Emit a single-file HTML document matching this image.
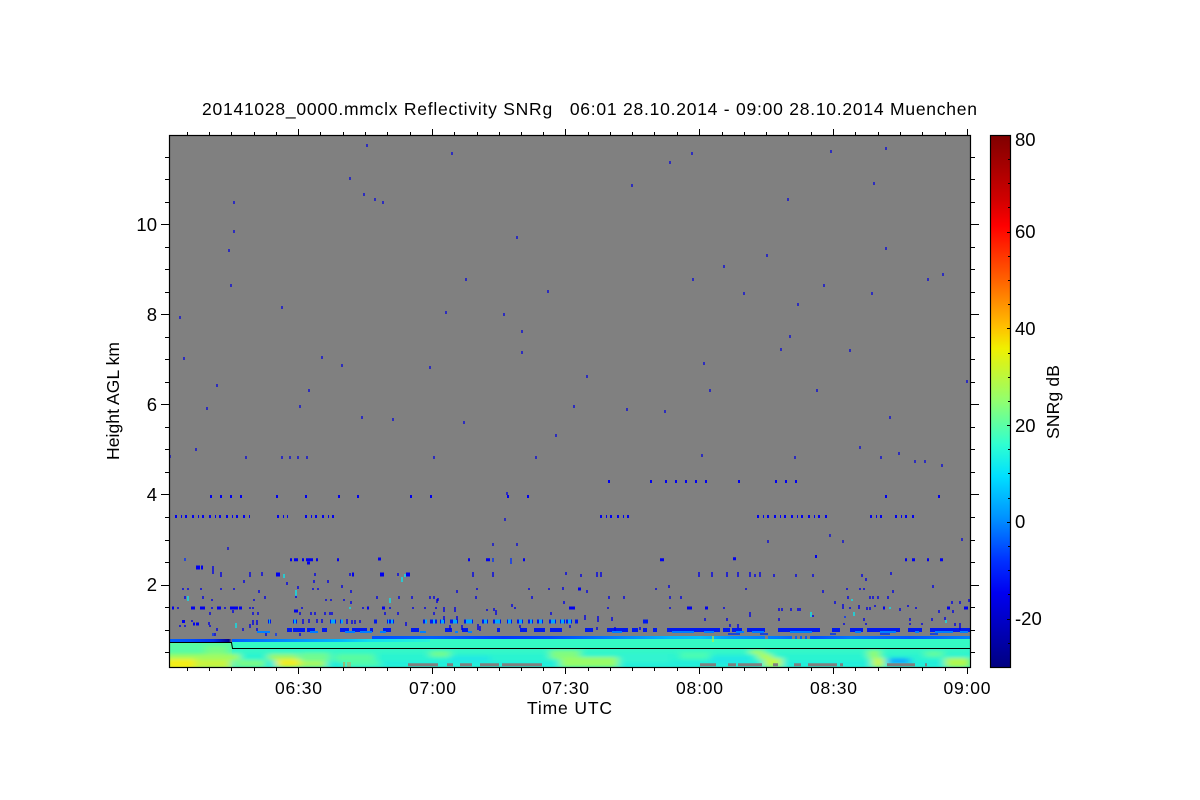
<!DOCTYPE html>
<html><head><meta charset="utf-8"><style>
html,body{margin:0;padding:0;background:#fff;width:1200px;height:800px;overflow:hidden}
svg{display:block}
text{font-family:"Liberation Sans",sans-serif;font-size:17.5px;fill:#000}
.n{font-size:18.5px}
</style></head><body>
<svg width="1200" height="800" viewBox="0 0 1200 800" xmlns="http://www.w3.org/2000/svg">
<defs>
<clipPath id="c"><rect x="170" y="136" width="800" height="531"/></clipPath>
<clipPath id="h"><path d="M170 643H232V649H970V667H170Z"/></clipPath>
<filter id="b" x="-30%" y="-100%" width="160%" height="300%"><feGaussianBlur stdDeviation="4 1.8"/></filter>
<linearGradient id="cb" x1="0" y1="0" x2="0" y2="1">
<stop offset="0" stop-color="#800000"/><stop offset=".12" stop-color="#d00000"/><stop offset=".17" stop-color="#ff0000"/><stop offset=".27" stop-color="#ff6000"/><stop offset=".36" stop-color="#ffc000"/><stop offset=".4" stop-color="#f0f000"/><stop offset=".5" stop-color="#90ff70"/><stop offset=".58" stop-color="#30ffd0"/><stop offset=".64" stop-color="#00e0ff"/><stop offset=".72" stop-color="#0090ff"/><stop offset=".8" stop-color="#0030ff"/><stop offset=".86" stop-color="#0000f0"/><stop offset="1" stop-color="#000080"/>
</linearGradient>
<linearGradient id="bl" gradientUnits="userSpaceOnUse" x1="372" x2="970" y1="0" y2="0">
<stop offset="0" stop-color="#0050ff"/><stop offset=".1" stop-color="#0060ff"/><stop offset=".22" stop-color="#0038ff"/><stop offset=".3" stop-color="#0048ff"/><stop offset=".38" stop-color="#0070ff"/><stop offset=".44" stop-color="#0090ff"/><stop offset=".5" stop-color="#00b8ff"/><stop offset=".55" stop-color="#00c0ff"/><stop offset=".6" stop-color="#0098ff"/><stop offset=".68" stop-color="#0078ff"/><stop offset=".74" stop-color="#0050ff"/><stop offset=".8" stop-color="#0078ff"/><stop offset=".9" stop-color="#0058ff"/><stop offset="1" stop-color="#0080ff"/>
</linearGradient>
<linearGradient id="cy" gradientUnits="userSpaceOnUse" x1="232" x2="430" y1="0" y2="0">
<stop offset="0" stop-color="#0060ff"/><stop offset=".3" stop-color="#0090ff"/><stop offset=".55" stop-color="#00b8ff"/><stop offset=".7" stop-color="#10e0f0"/><stop offset="1" stop-color="#28f4d8"/>
</linearGradient>
<linearGradient id="lf" gradientUnits="userSpaceOnUse" x1="170" x2="232" y1="0" y2="0">
<stop offset="0" stop-color="#0060ff"/><stop offset=".3" stop-color="#0050ff"/><stop offset=".7" stop-color="#0030f0"/><stop offset=".95" stop-color="#000090"/><stop offset="1" stop-color="#808080"/>
</linearGradient>
</defs>
<rect width="1200" height="800" fill="#fff"/>
<rect x="170" y="136" width="800" height="531" fill="#808080"/>
<g clip-path="url(#c)">
<!-- heat base -->
<rect x="170" y="642" width="800" height="25" fill="#30f4d0"/>
<rect x="232" y="639" width="738" height="10" fill="#34fac4"/>
<rect x="232" y="639" width="198" height="3" fill="url(#cy)"/>
<rect x="372" y="636" width="598" height="3" fill="url(#bl)"/>
<rect x="170" y="639" width="62" height="3" fill="url(#lf)"/>
<rect x="170" y="643" width="62" height="24" fill="#58fca4"/>
<g clip-path="url(#h)"><g filter="url(#b)">
<rect x="232" y="649" width="738" height="4" fill="#38f8c4"/>
<rect x="232" y="653" width="738" height="8" fill="#2cf4d0"/>
<rect x="232" y="661" width="738" height="6" fill="#24eedc"/>
<rect x="165" y="654" width="75" height="6" fill="#a0fc60"/>
<rect x="165" y="659" width="30" height="10" fill="#f4ee18"/>
<rect x="195" y="660" width="36" height="8" fill="#c8f440"/>
<rect x="205" y="646" width="22" height="8" fill="#78fc84"/>
<rect x="235" y="660" width="30" height="7" fill="#78fc88"/>
<rect x="268" y="654" width="30" height="6" fill="#98f868"/>
<rect x="276" y="659" width="24" height="8" fill="#f0ee20"/>
<rect x="300" y="653" width="30" height="8" fill="#70fc90"/>
<rect x="300" y="661" width="26" height="6" fill="#a8f860"/>
<rect x="335" y="654" width="40" height="8" fill="#58fca0"/>
<rect x="345" y="661" width="35" height="5" fill="#50fcac"/>
<rect x="430" y="651" width="20" height="6" fill="#70fc90"/>
<rect x="450" y="656" width="40" height="6" fill="#20e8e4"/>
<rect x="550" y="650" width="30" height="9" fill="#80fc80"/>
<rect x="560" y="657" width="58" height="10" fill="#98fc68"/>
<rect x="620" y="655" width="50" height="8" fill="#30f4d0"/>
<rect x="680" y="652" width="30" height="7" fill="#48fcb4"/>
<rect x="710" y="656" width="40" height="8" fill="#20e8e4"/>
<rect x="750" y="650" width="14" height="4" fill="#a8fc58"/>
<rect x="758" y="654" width="14" height="5" fill="#b0fc50"/>
<rect x="764" y="658" width="18" height="9" fill="#c0f848"/>
<rect x="868" y="650" width="12" height="8" fill="#90fc70"/>
<rect x="872" y="658" width="12" height="9" fill="#c8f840"/>
<rect x="888" y="658" width="22" height="6" fill="#0aa8ff"/>
<rect x="925" y="651" width="18" height="6" fill="#60fca0"/>
<rect x="945" y="658" width="25" height="9" fill="#b0f850"/>
</g></g>
<!-- gray strip -->
<path d="M408 664.8h30M447 664.8h6M460 664.8h12M480 664.8h19M502 664.8h40M700 664.8h16M728 664.8h8m2 0h24M773 664.8h5M794 664.8h7M808 664.8h29m3 0h3M887 664.8h28M925 664.8h2" stroke="#808080" stroke-width="3" fill="none"/>
<path d="M344 662v5" stroke="#f08020" fill="none"/>
<path d="M348 662v5M350 662v5" stroke="#c0a060" fill="none"/>
<path d="M713 636v6" stroke="#c8f030" stroke-width="1.2" fill="none"/>
<!-- gaps in the blue band -->
<path d="M765 637.5h3M792 637.5h19" stroke="#808080" stroke-width="3" fill="none" stroke-dasharray="3 2"/>
<!-- black boundary -->
<path d="M170 642.5H231.5L232.5 648.5H970" stroke="#000" stroke-width="1" fill="none"/>
<!-- wide speckle rows -->
<g fill="none" stroke-width="3" stroke="#0000f0">
<path stroke-dasharray="2 4 1 3 2 5" d="M175 516.5H250M277 516.5H288M305 516.5H335M600 516.5H630M757 516.5H830M870 516.5H885M895 516.5H915"/>
<path stroke-dasharray="2 8" d="M210 496.5H246M276 496.5H279M305 496.5H308M338 496.5H340M357 496.5H359M410 496.5H416M430 496.5H432M507 496.5H509M527 496.5H529M885 496.5H887M938 496.5H940"/>
<path stroke-dasharray="2 8" d="M650 481.5H652M665 481.5H712M738 481.5H740M775 481.5H803M608 481.5H612"/>
<path d="M290 559.8h2M294 559.8h4M302 559.8h2M306 559.8h7M316 559.8h2M307 563h3M337 559.8h2M468 559.8h2M486 559.8h4M523 559.8h2M660 559.8h4M733 558.8h3M815 556.5h2M912 559.8h3M927 559.8h2M940 559.8h3M378 559h3M905 559.8h2"/>
<path d="M196 567.5h4M201 567.5h2M276 574.5h4M380 574.5h4M406 574.5h4M352 574.5h2" stroke-width="4"/>
<path d="M172 608h2M191 608h4M200 608h5M217 608h4M230 608h8M239 608h3M294 611h4M367 608h2M382 608h3M569 608h6M687 608h5M705 608h3M883 608h2M947 608h3M964 608h4"/>
<path d="M182 621.5h3M193 624h2M196 624h3M578 589h3" stroke-width="3"/>
</g>
<!-- dense rows -->
<g fill="none" stroke-width="4">
<path stroke="#0018f0" d="M268 621.5h3M293 621.5h4M330 621.5h6M340 621.5h3M374 621.5h3M387 621.5h7M423 621.5h4M430 621.5h7M440 621.5h5M450 621.5h8M464 621.5h9M482 621.5h6M493 621.5h8M507 621.5h5M517 621.5h6M528 621.5h5M537 621.5h6M549 621.5h7M560 621.5h5M566 621.5h6M575 621.5h3M643 621.5h5"/>
<path stroke="#00a8ff" d="M269 621.5h1M294 621.5h2M331 621.5h4M341 621.5h2M388 621.5h1M391 621.5h2M425 621.5h2M433 621.5h2M441 621.5h3M453 621.5h4M466 621.5h6M484 621.5h3M495 621.5h5M508 621.5h3M519 621.5h3M530 621.5h2M539 621.5h3M551 621.5h4M561 621.5h3M568 621.5h3"/>
<path stroke="#0018f0" d="M287 630h5M293 630h12M307 630h8M322 630h5M340 630h7M352 630h3M347 630h2M355 630h12M370 630h3M383 630h8M411 630h8M445 630h7M462 630h6M497 630h3M520 630h7M534 630h11M550 630h12M585 630h8M607 630h21M632 630h6M643 630h4M653 630h4M667 630h33M700 630h20M723 630h7M732 630h10M747 630h18M778 630h42M832 630h8M850 630h13M867 630h33M908 630h14M930 630h40"/>
<path stroke="#0080ff" stroke-width="2" d="M257 632h13M310 632h8M345 632h10M360 632h12M380 632h6M420 632h6M455 632h3M468 632h4M612 632h10M672 632h22M704 632h10M736 632h8M752 632h12M790 632h22M855 632h6M880 632h16M915 632h4M935 632h18M960 632h8"/>
<path stroke="#0030f0" stroke-width="1.5" d="M728 634h12M760 634h8M830 634h6M880 634h10M930 634h8"/>
</g>
<!-- vertical bars -->
<path fill="none" stroke="#0000e8" stroke-width="1.4" d="M213 566v8M221 572v5M250 572v5M262 572v4M315 573v3M350 573v3M398 573v3M473 572v5M493 572v5M566 572v3M581 574v3M597 572v5M601 572v5M699 572v5M712 572v5M727 572v5M738 572v5M750 572v5M755 574v3M760 572v5M774 574v3M796 574v3M813 574v3M862 574v3M866 578v3M891 572v3M244 580v3M287 582v3M298 586v3M314 580v3M328 580v3M342 585v3M183 588v2M188 588v2M201 588v2M221 588v2M234 588v2M259 590v3M313 588v2M318 588v2M351 590v3M457 590v3M477 588v2M529 588v2M549 588v2M563 587v3M587 590v3M656 588v2M669 585v3M746 588v2M823 590v3M847 588v2M860 588v2M864 588v2M893 590v3M933 585v3M185 596v3M203 596v3M212 599v2M254 599v2M265 596v3M296 595v3M326 599v2M331 599v2M344 599v2M351 601v3M377 596v3M399 596v3M412 596v3M430 596v3M438 598v3M434 596v3M437 599v4M476 596v3M512 604v3M532 596v3M564 601v3M609 596v3M624 596v3M670 596v3M681 596v3M848 596v3M870 596v3M873 596v3M878 596v3M888 596v3M835 601v3M952 601v3M960 601v3M969 599v3M178 607v2M212 607v2M225 607v2M250 607v2M253 607v2M302 607v2M363 607v2M390 607v2M413 607v2M425 607v2M436 607v2M444 607v5M455 607v5M487 609v2M494 608v3M496 610v5M515 607v2M608 607v2M670 607v2M724 607v2M779 608v3M782 608v3M791 608v3M798 608v3M800 608v3M843 604v5M850 607v2M859 605v4M867 607v3M870 607v3M875 605v2M900 608v3M908 605v2M916 607v2M939 610v3M953 610v3M210 612v3M233 610v3M253 612v3M258 612v3M300 612v3M311 612v3M315 612v3M325 612v3M330 612v3M332 612v3M385 612v3M398 612v3M434 612v3M551 612v3M750 612v5M813 615v2M705 618v3M727 618v3M779 618v3M864 618v3M910 618v3M932 618v3M945 617v3M192 620v2M209 622v3M253 620v5M257 620v5M303 619v5M309 619v4M317 619v4M322 619v4M347 619v5M352 620v4M355 620v4M360 620v3M406 622v4M444 616v4M457 616v4M585 615v5M598 616v6M612 617v4M844 623v2M866 623v2M910 623v2M922 623v2M730 624v3M738 624v4M955 623v3M960 623v7M250 624v4M180 625v2M185 625v2M210 625v2M217 628v3M243 628v3M257 628v3M450 625v5M480 626v5M462 625v5M478 624v6M520 625v3M570 625v3M597 627v3M615 627v4M640 627v3M300 633v3M266 633v3M215 633v3"/>
<path fill="none" stroke="#0030ff" stroke-width="1.4" d="M511 558v6M493 558v4M185 558v3M213 633v3M276 633v3M845 616v2"/>
<path fill="none" stroke="#10e0e8" stroke-width="1.5" d="M284 574v4M402 577v5M188 596v5M296 590v6M390 598v5M236 623v5M811 612v5M946 620v3M852 599v2M854 612v4M350 607v2M890 607v2M405 574v3"/>
<!-- sparse points -->
<path fill="none" stroke="#0000e0" stroke-width="1.3" d="M367 144v3M452 152v3M692 152v3M670 161v3M831 150v3M886 147v3M632 184v3M350 177v3M364 193v3M375 198v3M383 201v3M234 201v3M234 230v3M229 249v3M231 284v3M517 236v3M788 198v3M874 182v3M886 247v3M767 254v3M724 265v3M943 273v3M928 278v3M872 292v3M824 284v3M744 292v3M693 278v3M466 278v3M548 290v3M282 306v3M180 316v3M446 311v3M504 313v3M522 330v3M522 351v3M798 303v3M790 335v3M781 348v3M850 349v3M184 357v3M322 356v3M342 364v3M430 366v3M587 375v3M217 384v3M309 389v3M967 380v3M704 362v3M710 389v3M817 389v3M207 407v3M300 405v3M362 416v3M393 418v3M464 421v3M574 405v3M627 408v3M665 410v3M890 416v3M556 434v3M860 446v3M196 448v3M170 455v3M246 456v3M282 456v3M290 456v3M298 456v3M307 456v3M434 456v3M536 456v3M702 454v3M795 456v3M881 456v3M899 452v3M915 460v3M925 460v3M942 464v3M507 492v3M228 547v3M505 518v3M830 534v3M843 540v3M517 543v3M493 543v3M962 538v3M768 540v3"/>
</g>
<!-- frame -->
<rect x="169.5" y="135.5" width="801" height="532" fill="none" stroke="#000" stroke-width="1.2"/>
<!-- ticks -->
<g fill="none" stroke="#000" stroke-width="1">
<path d="M298.5 135v-6M432.5 135v-6M565.5 135v-6M699.5 135v-6M833.5 135v-6M967.5 135v-6M298.5 668v6M432.5 668v6M565.5 668v6M699.5 668v6M833.5 668v6M967.5 668v6"/>
<path d="M187.5 135v-3M209.5 135v-3M231.5 135v-3M254.5 135v-3M276.5 135v-3M320.5 135v-3M343.5 135v-3M365.5 135v-3M387.5 135v-3M410.5 135v-3M454.5 135v-3M477.5 135v-3M499.5 135v-3M521.5 135v-3M543.5 135v-3M588.5 135v-3M610.5 135v-3M632.5 135v-3M654.5 135v-3M677.5 135v-3M722.5 135v-3M744.5 135v-3M766.5 135v-3M788.5 135v-3M811.5 135v-3M855.5 135v-3M878.5 135v-3M900.5 135v-3M922.5 135v-3M945.5 135v-3"/>
<path d="M187.5 668v3M209.5 668v3M231.5 668v3M254.5 668v3M276.5 668v3M320.5 668v3M343.5 668v3M365.5 668v3M387.5 668v3M410.5 668v3M454.5 668v3M477.5 668v3M499.5 668v3M521.5 668v3M543.5 668v3M588.5 668v3M610.5 668v3M632.5 668v3M654.5 668v3M677.5 668v3M722.5 668v3M744.5 668v3M766.5 668v3M788.5 668v3M811.5 668v3M855.5 668v3M878.5 668v3M900.5 668v3M922.5 668v3M945.5 668v3"/>
<path d="M169 224.5h-8M169 314.5h-8M169 404.5h-8M169 494.5h-8M169 585.5h-8M971 224.5h8M971 314.5h8M971 404.5h8M971 494.5h8M971 585.5h8"/>
<path d="M169 157.5h-4M169 179.5h-4M169 202.5h-4M169 247.5h-4M169 269.5h-4M169 292.5h-4M169 337.5h-4M169 359.5h-4M169 382.5h-4M169 427.5h-4M169 449.5h-4M169 472.5h-4M169 517.5h-4M169 540.5h-4M169 562.5h-4M169 607.5h-4M169 630.5h-4M169 652.5h-4"/>
<path d="M971 157.5h4M971 179.5h4M971 202.5h4M971 247.5h4M971 269.5h4M971 292.5h4M971 337.5h4M971 359.5h4M971 382.5h4M971 427.5h4M971 449.5h4M971 472.5h4M971 517.5h4M971 540.5h4M971 562.5h4M971 607.5h4M971 630.5h4M971 652.5h4"/>
</g>
<!-- colorbar -->
<rect x="990.5" y="135.5" width="20" height="532" fill="url(#cb)" stroke="#000" stroke-width="1.2"/>
<path d="M1010 159.5h-2M1010 183.5h-2M1010 207.5h-2M1010 232.5h-3M1010 256.5h-2M1010 280.5h-2M1010 304.5h-2M1010 328.5h-3M1010 353.5h-2M1010 377.5h-2M1010 401.5h-2M1010 425.5h-3M1010 449.5h-2M1010 473.5h-2M1010 498.5h-2M1010 522.5h-3M1010 546.5h-2M1010 570.5h-2M1010 594.5h-2M1010 619.5h-3M1010 643.5h-2" stroke="#000" fill="none"/>
<!-- texts -->
<text x="202" y="115" textLength="775" lengthAdjust="spacing" xml:space="preserve">20141028_0000.mmclx Reflectivity SNRg   06:01 28.10.2014 - 09:00 28.10.2014 Muenchen</text>
<text class="n" x="157" y="231" text-anchor="end">10</text><text class="n" x="157" y="321" text-anchor="end">8</text><text class="n" x="157" y="411" text-anchor="end">6</text><text class="n" x="157" y="501" text-anchor="end">4</text><text class="n" x="157" y="591" text-anchor="end">2</text>
<g text-anchor="middle">
<text x="298.5" y="694" textLength="47">06:30</text><text x="432.5" y="694" textLength="47">07:00</text><text x="565.5" y="694" textLength="47">07:30</text><text x="699.5" y="694" textLength="47">08:00</text><text x="833.5" y="694" textLength="47">08:30</text><text x="967" y="694" textLength="47">09:00</text>
<text x="569.5" y="714" textLength="85">Time UTC</text>
<text transform="translate(119 401) rotate(-90)" textLength="118">Height AGL km</text>
<text transform="translate(1059 402) rotate(-90)" textLength="74">SNRg dB</text>
</g>
<text class="n" x="1015" y="146">80</text><text class="n" x="1015" y="238">60</text><text class="n" x="1015" y="335">40</text><text class="n" x="1015" y="432">20</text><text class="n" x="1015" y="528">0</text><text class="n" x="1015" y="625">-20</text>
</svg>
</body></html>
